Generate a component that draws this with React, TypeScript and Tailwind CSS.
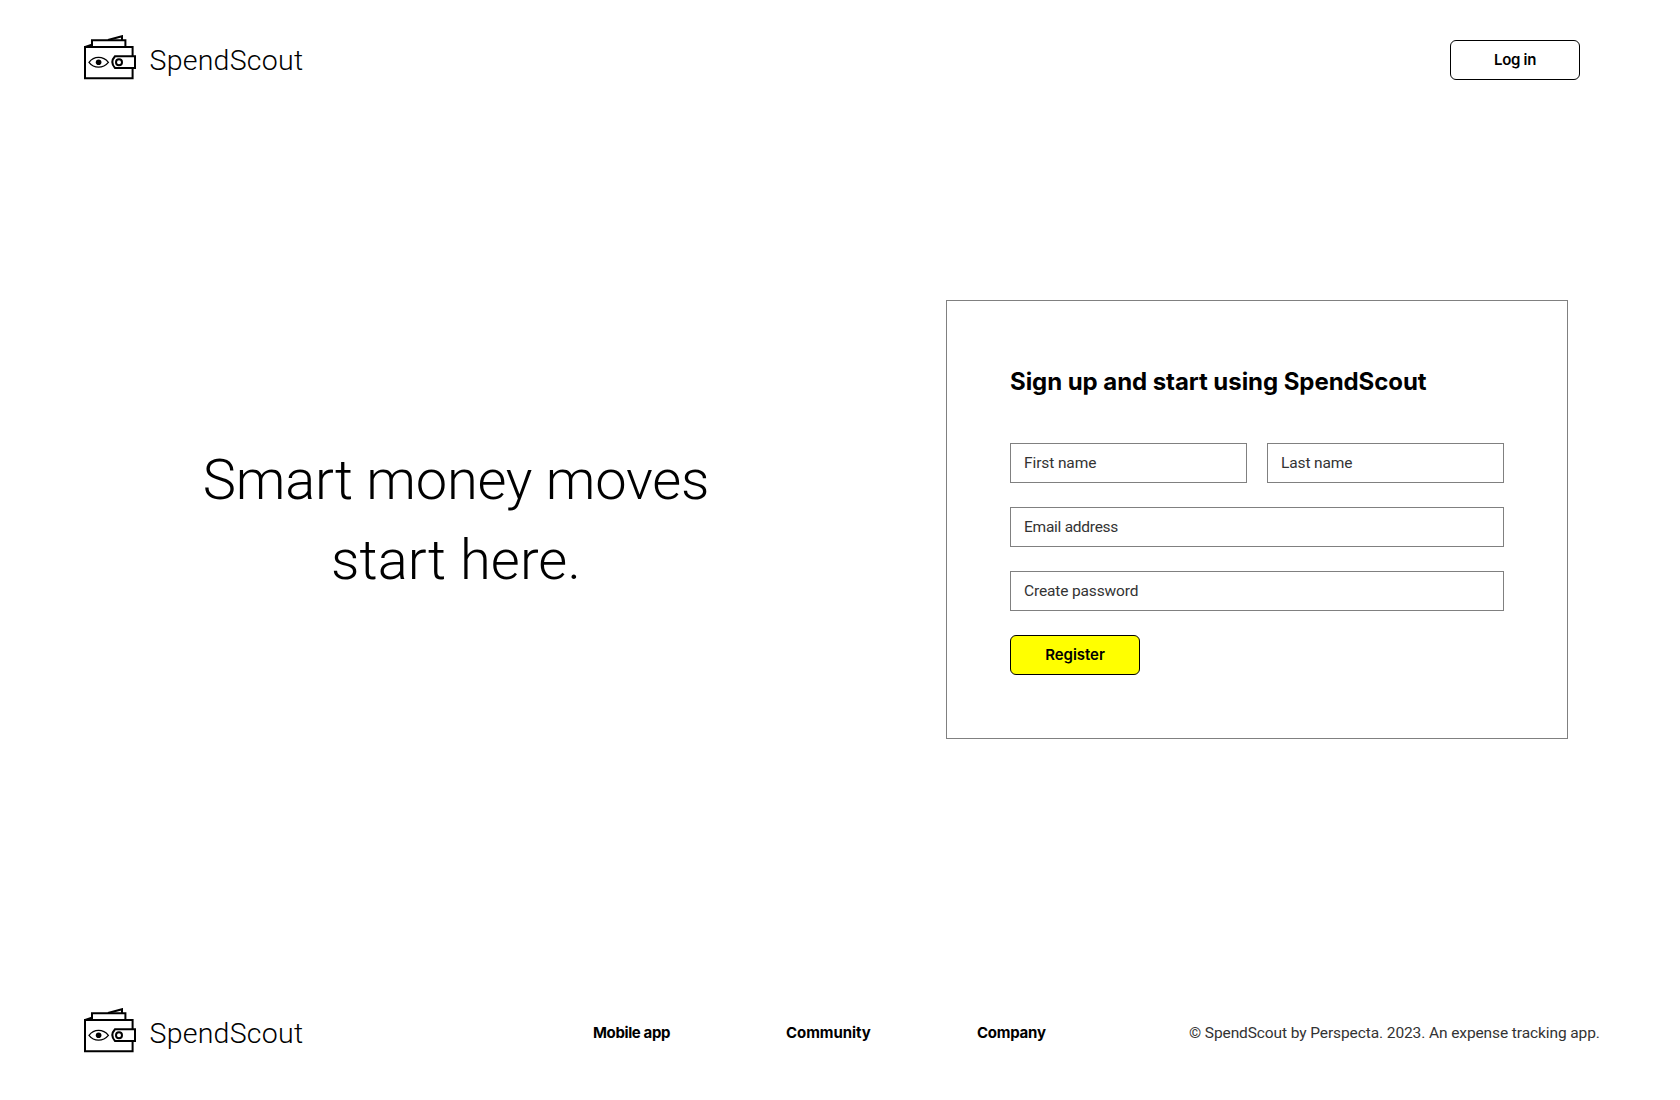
function WalletMark() {
  return (
    <svg width="52" height="45" viewBox="0 0 52 45" fill="none" stroke="#000" strokeWidth="2" className="shrink-0">
      <path d="M1 12H48.6V43.2H1Z" />
      <path d="M8 11.5V5.3H41.4V11.5" />
      <path d="M1.2 12L7.8 9.7" />
      <path d="M24 5L38 1.2V5.2" />
      <path d="M31 21.3H51V33H31Q25.6 27.2 31 21.3Z" fill="#fff" />
      <circle cx="35" cy="27.2" r="3" />
      <path d="M5 27.3C10 20.8 19 20.8 24.4 27.3C19 33.8 10 33.8 5 27.3Z" strokeWidth="1.3" />
      <circle cx="14.6" cy="27.3" r="2.8" fill="#000" stroke="none" />
    </svg>
  );
}

function Logo() {
  return (
    <div className="flex items-center">
      <WalletMark />
      <span className="mt-[7px] ml-[13.5px] text-[28.5px] leading-9 font-[330] tracking-[0.25px] text-black">SpendScout</span>
    </div>
  );
}

function Field({ label, tracking }: { label: string; tracking: string }) {
  return (
    <div className="flex h-10 min-w-0 flex-1 items-center border border-[#808080] px-[13px]">
      <span className={`text-[15.5px] leading-6 text-[#333] ${tracking}`}>{label}</span>
    </div>
  );
}

export default function App() {
  return (
    <div className="flex h-[1100px] w-[1680px] flex-col overflow-hidden bg-white font-['Roboto',sans-serif] text-black">
      <header className="flex h-[120px] items-start justify-between pr-[100px] pl-21">
        <div className="pt-[35px]">
          <Logo />
        </div>
        <button className="mt-10 h-10 w-[130px] rounded-md border border-black font-['Inter',sans-serif] text-[15px] font-semibold tracking-[-0.3px]">
          Log in
        </button>
      </header>

      <main className="flex flex-1 items-start">
        <h1 className="mt-[320px] ml-[155px] w-[602px] text-center text-[56px] leading-20 font-[330]">
          <span className="block tracking-[-0.22px]">Smart money moves</span>
          <span className="block tracking-[0.1px]">start here.</span>
        </h1>
        <section className="mt-[180px] ml-[189px] h-[439px] w-[622px] border border-[#808080] px-[63px] pt-[61px]">
          <h2 className="font-['Inter',sans-serif] text-[24px] leading-10 font-bold tracking-[-0.06px] whitespace-nowrap">
            Sign up and start using SpendScout
          </h2>
          <form className="mt-[41px] flex flex-col gap-6">
            <div className="flex gap-5">
              <Field label="First name" tracking="tracking-[-0.1px]" />
              <Field label="Last name" tracking="tracking-[-0.12px]" />
            </div>
            <div className="flex">
              <Field label="Email address" tracking="tracking-[-0.26px]" />
            </div>
            <div className="flex">
              <Field label="Create password" tracking="tracking-[-0.14px]" />
            </div>
            <button
              type="button"
              className="h-10 w-[130px] rounded-md border border-black bg-[#ffff00] font-['Inter',sans-serif] text-[15px] font-semibold tracking-[-0.05px]"
            >
              Register
            </button>
          </form>
        </section>
      </main>

      <footer className="flex h-[92px] items-start pl-21">
        <Logo />
        <nav className="mt-[13px] flex flex-1 justify-end font-['Inter',sans-serif] text-[15px] leading-6 font-bold">
          <a className="w-[193px] tracking-[-0.38px]">Mobile app</a>
          <a className="w-[191px] tracking-[-0.05px]">Community</a>
          <a className="w-[212px] tracking-[-0.25px]">Company</a>
        </nav>
        <p className="mt-[13px] w-[491px] text-[15.5px] leading-6 tracking-[-0.1px] whitespace-nowrap text-[#333]">
          © SpendScout by Perspecta. 2023. An expense tracking app.
        </p>
      </footer>
    </div>
  );
}
